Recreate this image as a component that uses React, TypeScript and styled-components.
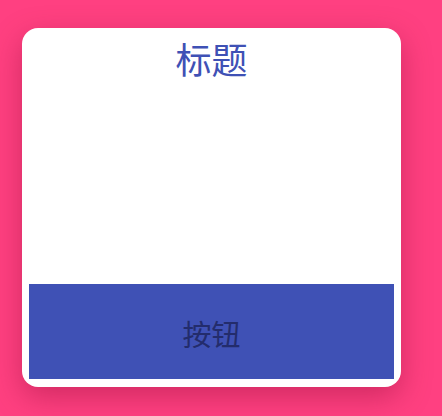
import React from 'react';
import styled, { createGlobalStyle } from 'styled-components';

const GlobalStyle = createGlobalStyle`
  html, body {
    margin: 0;
    padding: 0;
    background: #ff4081;
  }

  body {
    font-family: "Noto Sans CJK SC", "Noto Sans", sans-serif;
  }
`;

const Page = styled.div`
  width: 442px;
  height: 416px;
  box-sizing: border-box;
  padding: 28px 41px 29px 22px;
  display: flex;
`;

const Card = styled.div`
  flex: 1;
  display: flex;
  flex-direction: column;
  background: #ffffff;
  border-radius: 16px;
  box-shadow: 0 10px 30px rgba(120, 0, 40, 0.35);
  padding: 0 7px 8px 7px;
`;

const Title = styled.h1`
  margin: 5px 0 0;
  font-size: 36px;
  font-weight: 400;
  line-height: 50px;
  color: #3f51b5;
  text-align: center;
`;

const Body = styled.div`
  flex: 1;
`;

const ActionButton = styled.button`
  height: 95px;
  border: none;
  border-radius: 0;
  background: #3f51b5;
  color: #232c6c;
  font-family: inherit;
  font-size: 29px;
  padding: 2px 0 0;
  cursor: pointer;
`;

const App = () => {
  return (
    <>
      <GlobalStyle />
      <Page>
        <Card>
          <Title>标题</Title>
          <Body />
          <ActionButton>按钮</ActionButton>
        </Card>
      </Page>
    </>
  );
};

export default App;
